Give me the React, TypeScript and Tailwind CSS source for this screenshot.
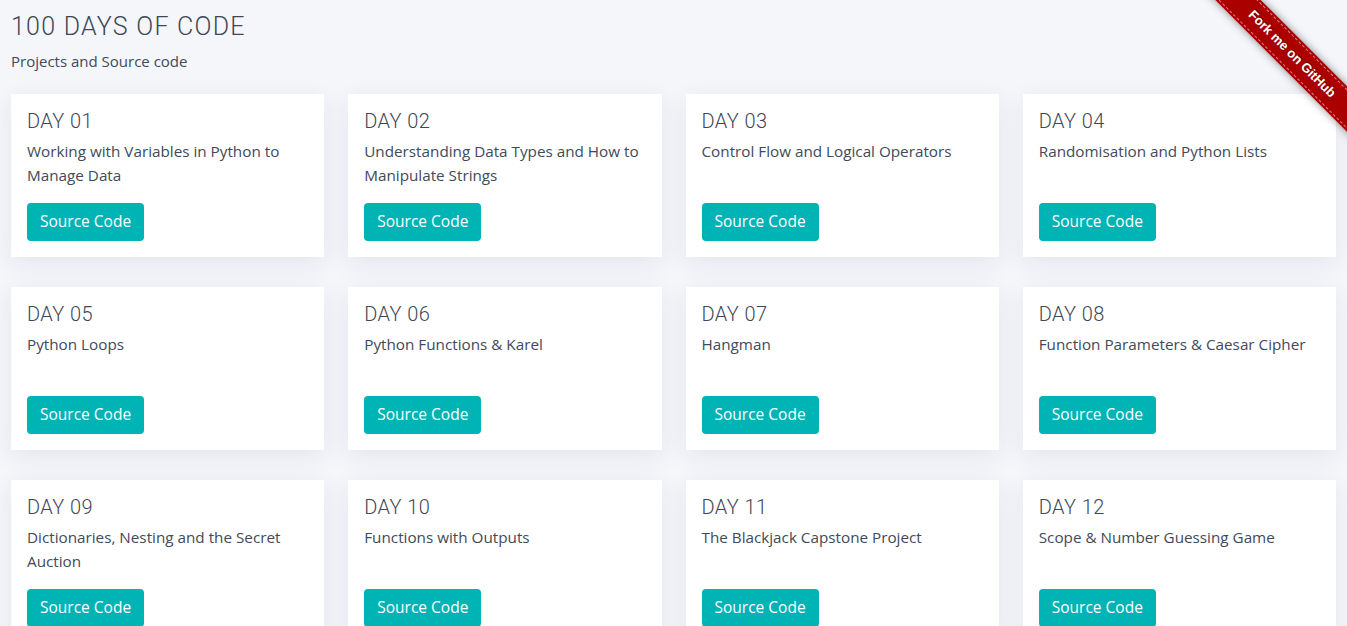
const DAYS: { day: string; title: string }[] = [
  { day: '01', title: 'Working with Variables in Python to Manage Data' },
  { day: '02', title: 'Understanding Data Types and How to Manipulate Strings' },
  { day: '03', title: 'Control Flow and Logical Operators' },
  { day: '04', title: 'Randomisation and Python Lists' },
  { day: '05', title: 'Python Loops' },
  { day: '06', title: 'Python Functions & Karel' },
  { day: '07', title: 'Hangman' },
  { day: '08', title: 'Function Parameters & Caesar Cipher' },
  { day: '09', title: 'Dictionaries, Nesting and the Secret Auction' },
  { day: '10', title: 'Functions with Outputs' },
  { day: '11', title: 'The Blackjack Capstone Project' },
  { day: '12', title: 'Scope & Number Guessing Game' },
  { day: '13', title: 'Debugging: How to Find and Fix Errors in your Code' },
  { day: '14', title: 'Higher Lower Game Project' },
  { day: '15', title: 'Local Development Environment Setup & the Coffee Machine' },
  { day: '16', title: 'Object Oriented Programming (OOP)' },
]

const HEADING_FONT = "font-['Roboto',sans-serif]"
const BODY_FONT = "font-['Open_Sans',sans-serif]"

function GithubRibbon() {
  return (
    <div className="absolute top-0 right-0 w-[180px] h-[180px] overflow-hidden pointer-events-none">
      <a
        href="#"
        className="absolute left-0 top-[38px] w-[250px] h-[32px] rotate-45 bg-[#a00] shadow-[0_0_8px_rgba(0,0,0,0.45)] flex items-center pointer-events-auto"
      >
        <span className="flex-1 my-[2px] h-[28px] border-y border-dashed border-white/50 flex items-center justify-center text-white text-[13px] font-bold font-['Liberation_Sans',Arial,sans-serif] [text-shadow:0_-1px_0_rgba(0,0,0,0.5)]">
          Fork me on GitHub
        </span>
      </a>
    </div>
  )
}

function DayCard({ day, title }: { day: string; title: string }) {
  return (
    <div className="bg-white shadow-[0_6px_24px_rgba(30,40,80,0.08)] pt-[15px] pb-4 px-4 flex flex-col">
      <h3 className={`${HEADING_FONT} font-light text-[20px] leading-[24px] tracking-[0.02em] text-[#3f4756]`}>
        DAY {day}
      </h3>
      <p className={`${BODY_FONT} mt-[6px] text-[15.25px] leading-[24px] h-[48px] text-[#414a59]`}>
        {title}
      </p>
      <div className="mt-4">
        <a
          href="#"
          className={`${BODY_FONT} inline-flex items-center h-[38px] px-[13px] rounded bg-[#00b3b5] text-white text-[15.5px]`}
        >
          Source Code
        </a>
      </div>
    </div>
  )
}

export default function App() {
  return (
    <div className="relative min-h-screen bg-[#f5f6fa] overflow-hidden">
      <GithubRibbon />
      <div className="px-[11px] pt-[12px] pb-10">
        <h1 className={`${HEADING_FONT} font-light text-[25px] leading-[30px] tracking-[0.05em] text-[#3f4756]`}>
          100 DAYS OF CODE
        </h1>
        <p className={`${BODY_FONT} mt-[7px] text-[15px] leading-[24px] text-[#414a59]`}>
          Projects and Source code
        </p>

        <div className="mt-[21px] grid grid-cols-4 gap-x-6 gap-y-[30px]">
          {DAYS.map(d => (
            <DayCard key={d.day} day={d.day} title={d.title} />
          ))}
        </div>
      </div>
    </div>
  )
}
